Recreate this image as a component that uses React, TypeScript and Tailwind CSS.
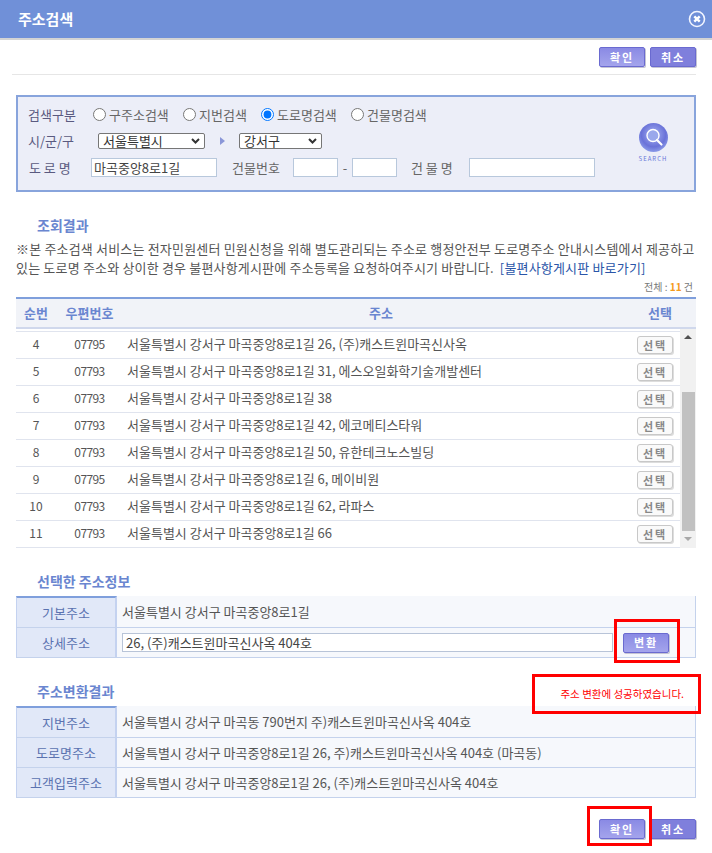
const rows = [
  ["4", "07795", "서울특별시 강서구 마곡중앙8로1길 26, (주)캐스트윈마곡신사옥"],
  ["5", "07793", "서울특별시 강서구 마곡중앙8로1길 31, 에스오일화학기술개발센터"],
  ["6", "07793", "서울특별시 강서구 마곡중앙8로1길 38"],
  ["7", "07793", "서울특별시 강서구 마곡중앙8로1길 42, 에코메티스타워"],
  ["8", "07793", "서울특별시 강서구 마곡중앙8로1길 50, 유한테크노스빌딩"],
  ["9", "07795", "서울특별시 강서구 마곡중앙8로1길 6, 메이비원"],
  ["10", "07793", "서울특별시 강서구 마곡중앙8로1길 62, 라파스"],
  ["11", "07793", "서울특별시 강서구 마곡중앙8로1길 66"],
];

function PurpleButton({ label, dark }: { label: string; dark?: boolean }) {
  return (
    <button
      className={`h-[20px] w-[46px] rounded-[2px] border border-[#6a6ad0] text-[11px] font-bold tracking-[2px] text-white shadow-[1px_1px_0_#c4c4d4] ${
        dark ? "bg-[#7f7fdc]" : "bg-gradient-to-b from-[#8a8ae4] to-[#a4a4ec]"
      }`}
    >
      {label}
    </button>
  );
}

function Radio({ label, checked, width }: { label: string; checked?: boolean; width: string }) {
  return (
    <label className={`flex items-center gap-[3px] ${width}`}>
      <input type="radio" name="searchType" defaultChecked={checked} className="m-0 h-[13px] w-[13px]" />
      <span>{label}</span>
    </label>
  );
}

function Select({ value, width }: { value: string; width: string }) {
  return (
    <span className={`relative flex h-[16px] ${width}`}>
      <select className="h-[16px] w-full appearance-none rounded-[2px] border border-[#767676] bg-white py-0 pl-[4px] text-[13px] leading-[14px] text-[#333]">
        <option>{value}</option>
      </select>
      <svg className="absolute right-[5px] top-[5px]" width="9" height="6" viewBox="0 0 9 6">
        <path d="M1 1l3.5 3.5L8 1" fill="none" stroke="#333" strokeWidth="2" />
      </svg>
    </span>
  );
}

function SectionTitle({ children }: { children: string }) {
  return <h2 className="pl-[37px] text-[14px] font-bold leading-[16px] text-[#6a86d0]">{children}</h2>;
}

function InfoRow({ label, children, first }: { label: string; children: React.ReactNode; first?: boolean }) {
  return (
    <div className={`flex ${first ? "h-[31px]" : "h-[30px] border-t border-[#c4d2ec]"}`}>
      <div
        className={`flex w-[101px] shrink-0 items-center justify-center border-l border-r-2 border-[#c4d2f0] bg-[#e1e8f8] text-[#5a72b0] ${
          first ? "border-t-2 border-t-[#7f9fdc]" : ""
        }`}
      >
        {label}
      </div>
      <div className="flex flex-1 items-center border-r border-[#c4d2ec] bg-[#f6f8fc] pl-[5px] text-[#555]">{children}</div>
    </div>
  );
}

export default function App() {
  return (
    <div
      className="relative h-[853px] w-[712px] overflow-hidden bg-white text-[13px] text-[#555]"
      style={{ fontFamily: '"Noto Sans CJK KR", sans-serif' }}
    >
      <header className="flex h-[40px] items-center justify-between border-b-2 border-[#d4d4d4] bg-[#7090d8] pl-[18px] pr-[6px]">
        <h1 className="text-[15px] font-bold text-white">주소검색</h1>
        <svg width="18" height="18" viewBox="0 0 18 18">
          <circle cx="9" cy="9" r="7.5" fill="#6f8fd8" stroke="#f2f5ff" strokeWidth="1.6" />
          <path d="M6.3 6.3l5.4 5.4M11.7 6.3l-5.4 5.4" stroke="#fff" strokeWidth="2.4" />
        </svg>
      </header>

      <div className="ml-[12px] mr-[16px] flex h-[35px] items-end justify-end gap-[5px] border-b border-[#e6e6e6] pb-[7px]">
        <PurpleButton label="확인" />
        <PurpleButton label="취소" dark />
      </div>

      <section className="relative mx-[16px] mt-[20px] h-[97px] border-2 border-[#88a4dc] bg-[#eceef8] text-[#5a5a80]">
        <div className="flex h-[36px] items-end pb-[9px] pl-[10px]">
          <span className="w-[65px]">검색구분</span>
          <div className="flex text-[#666]">
            <Radio label="구주소검색" width="w-[90px]" />
            <Radio label="지번검색" width="w-[78px]" />
            <Radio label="도로명검색" width="w-[90px]" checked />
            <Radio label="건물명검색" width="w-[90px]" />
          </div>
        </div>
        <div className="flex h-[16px] items-center pl-[10px]">
          <span className="w-[70px]">시/군/구</span>
          <Select value="서울특별시" width="w-[107px]" />
          <span className="ml-[15px] h-0 w-0 border-y-[4px] border-l-[5px] border-y-transparent border-l-[#8a96d8]" />
          <span className="ml-[14px]">
            <Select value="강서구" width="w-[83px]" />
          </span>
        </div>
        <div className="mt-[9px] flex items-center pl-[11px]">
          <span className="w-[62px]">도 로 명</span>
          <input
            defaultValue="마곡중앙8로1길"
            className="h-[19px] w-[126px] border border-[#b8c8dc] bg-white pl-[2px] text-[#444]"
          />
          <span className="ml-[15px] w-[61px] text-[#666]">건물번호</span>
          <input className="h-[19px] w-[45px] border border-[#b8c8dc] bg-white" />
          <span className="w-[14px] text-center text-[#666]">-</span>
          <input className="h-[19px] w-[45px] border border-[#b8c8dc] bg-white" />
          <span className="ml-[14px] w-[58px] text-[#666]">건 물 명</span>
          <input className="h-[19px] w-[126px] border border-[#b8c8dc] bg-white" />
        </div>
        <div className="absolute left-[617px] top-[26px] flex w-[36px] flex-col items-center">
          <svg width="29" height="29" viewBox="0 0 29 29">
            <defs>
              <radialGradient id="searchBall" cx="50%" cy="40%" r="60%">
                <stop offset="0%" stopColor="#a8b4f4" />
                <stop offset="70%" stopColor="#6a72d8" />
                <stop offset="100%" stopColor="#8a9ae8" />
              </radialGradient>
            </defs>
            <circle cx="14.5" cy="14.5" r="14.5" fill="url(#searchBall)" />
            <circle cx="14" cy="12.5" r="6" fill="#9aa8ec" stroke="#fff" strokeWidth="1.4" />
            <path d="M18 17l4.5 4.5" stroke="#fff" strokeWidth="2.2" strokeLinecap="round" />
          </svg>
          <span className="mt-[3px] text-[6px] leading-[8px] tracking-[1px] text-[#6a78d8]">SEARCH</span>
        </div>
      </section>

      <div className="mt-[25px]">
        <SectionTitle>조회결과</SectionTitle>
      </div>
      <p className="mx-[16px] mt-[6px] h-[38px] leading-[19px] tracking-[0.18px]">
        ※본 주소검색 서비스는 전자민원센터 민원신청을 위해 별도관리되는 주소로 행정안전부 도로명주소 안내시스템에서 제공하고 있는 도로명 주소와 상이한 경우 불편사항게시판에 주소등록을 요청하여주시기 바랍니다.{" "}
        <a className="ml-[3px] text-[#2a55a8]">[불편사항게시판 바로가기]</a>
      </p>
      <div className="mr-[19px] mt-[3px] text-right text-[10px] leading-[14px] text-[#777]">
        전체 : <b className="text-[#f59a1c]">11</b> 건
      </div>

      <div className="mx-[16px] mt-[3px]">
        <div className="flex h-[32px] items-center border-y-2 border-b-[#d0d8ec] border-t-[#7f9fdc] bg-[#f1f3f8] font-bold text-[#6a86d0]">
          <span className="w-[40px] text-center">순번</span>
          <span className="w-[67px] text-center">우편번호</span>
          <span className="flex-1 text-center">주소</span>
          <span className="mr-[15px] w-[42px] text-center">선택</span>
        </div>
        <div className="flex h-[219px] overflow-hidden">
          <ul className="mt-[2px] flex-1 border-t border-[#e0e4ee]">
            {rows.map((row) => (
              <li key={row[0]} className="flex h-[27px] items-center border-b border-[#e0e4ee]">
                <span className="w-[40px] pb-[2px] text-center text-[12px]">{row[0]}</span>
                <span className="w-[67px] pb-[2px] text-center text-[12px] tracking-[-0.6px]">{row[1]}</span>
                <span className="ml-[4px] flex-1 pb-[2px]">{row[2]}</span>
                <button className="mr-[7px] h-[18px] w-[36px] rounded-[3px] border border-[#c8c8c8] bg-[#fafafa] text-[11px] font-bold tracking-[2px] text-[#888] shadow-[1px_1px_0_#ddd]">
                  선택
                </button>
              </li>
            ))}
          </ul>
          <div className="flex w-[16px] flex-col items-center bg-[#f1f1f1]">
            <span className="mt-[6px] h-0 w-0 border-x-[4px] border-b-[4px] border-x-transparent border-b-[#505050]" />
            <span className="mt-[53px] h-[139px] w-[13px] bg-[#c1c1c1]" />
            <span className="mt-[6px] h-0 w-0 border-x-[4px] border-t-[4px] border-x-transparent border-t-[#a8a8a8]" />
          </div>
        </div>
      </div>

      <div className="mt-[25px]">
        <SectionTitle>선택한 주소정보</SectionTitle>
      </div>
      <div className="mx-[16px] mt-[7px] border-b border-[#c4d2ec]">
        <InfoRow label="기본주소" first>
          서울특별시 강서구 마곡중앙8로1길
        </InfoRow>
        <InfoRow label="상세주소">
          <input
            defaultValue="26, (주)캐스트윈마곡신사옥 404호"
            className="h-[19px] w-[491px] border border-[#b8c4d8] bg-white pl-[3px] text-[#444]"
          />
          <span className="ml-[10px] flex">
            <PurpleButton label="변환" />
          </span>
        </InfoRow>
      </div>

      <div className="mt-[25px]">
        <SectionTitle>주소변환결과</SectionTitle>
      </div>
      <div className="mx-[16px] mt-[7px] border-b border-[#c4d2ec]">
        <InfoRow label="지번주소" first>
          서울특별시 강서구 마곡동 790번지 주)캐스트윈마곡신사옥 404호
        </InfoRow>
        <InfoRow label="도로명주소">서울특별시 강서구 마곡중앙8로1길 26, 주)캐스트윈마곡신사옥 404호 (마곡동)</InfoRow>
        <InfoRow label="고객입력주소">서울특별시 강서구 마곡중앙8로1길 26, (주)캐스트윈마곡신사옥 404호</InfoRow>
      </div>

      <div className="mr-[16px] mt-[21px] flex justify-end gap-[5px]">
        <PurpleButton label="확인" />
        <PurpleButton label="취소" dark />
      </div>

      {/* red annotation boxes drawn over the screenshot */}
      <div className="absolute left-[614px] top-[619px] h-[44px] w-[66px] border-[3px] border-[#ff0000]" />
      <div className="absolute left-[532px] top-[674px] flex h-[40px] w-[169px] items-center justify-end border-[3px] border-[#ff0000] pr-[14px] text-[10.5px] text-[#ff0000]">
        주소 변환에 성공하였습니다.
      </div>
      <div className="absolute left-[587px] top-[806px] h-[40px] w-[65px] border-[3px] border-[#ff0000]" />
    </div>
  );
}
